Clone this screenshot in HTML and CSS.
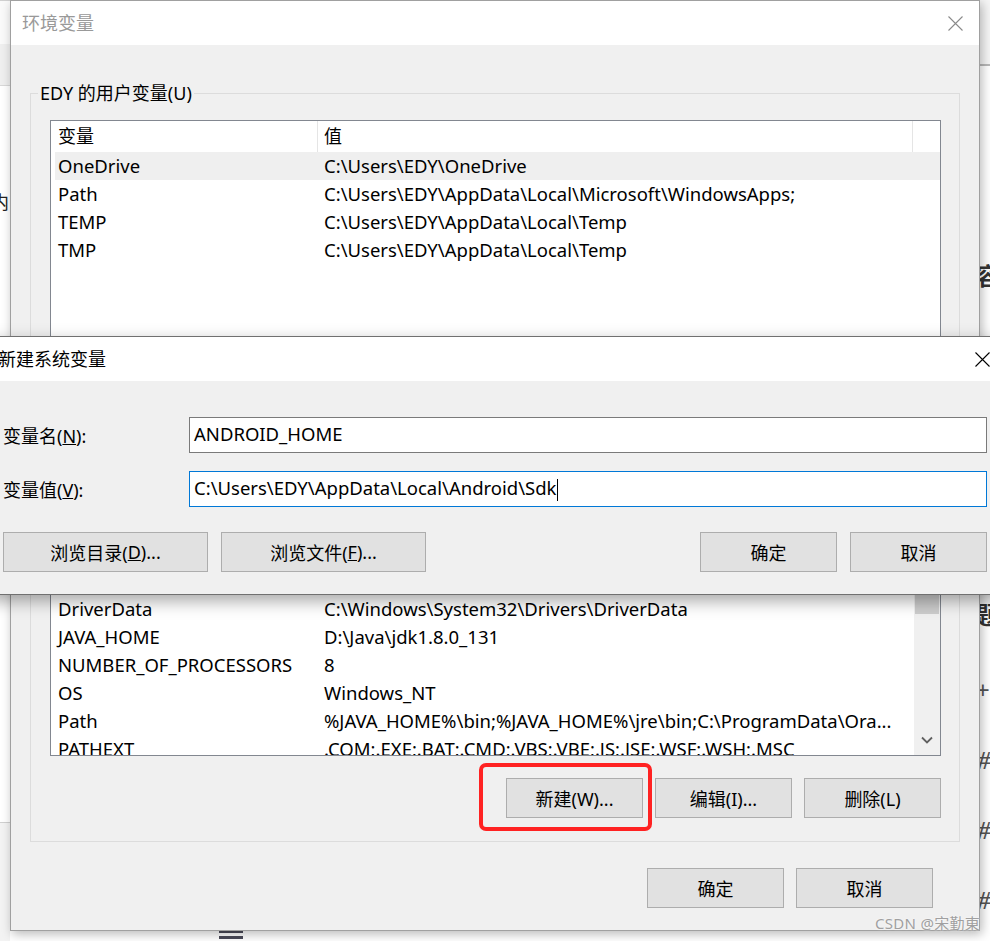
FILE: index.html
```html
<!DOCTYPE html>
<html lang="zh-CN">
<head>
<meta charset="utf-8">
<title>环境变量</title>
<link rel="stylesheet" href="styles.css">
</head>
<body>
<div class="desk">
  <div class="bg-left">
    <div class="bgl-white"></div>
    <div class="bgl-band"></div>
    <div class="bgl-page"><span class="bgl-char">内</span></div>
    <div class="bgl-foot"></div>
  </div>
  <div class="bg-bottom">
    <span class="menu-bar"></span>
    <span class="menu-bar"></span>
  </div>
  <div class="bg-right">
    <div class="bgr-top"></div>
    <div class="bgr-page">
      <span class="bgr-char c-rong">容</span>
      <span class="bgr-char c-ti">题</span>
      <span class="bgr-char c-plus">+</span>
      <span class="bgr-char c-h1">#</span>
      <span class="bgr-char c-h2">#</span>
      <span class="bgr-char c-h3">#</span>
    </div>
  </div>

  <div class="win env">
    <div class="titlebar">
      <span class="title">环境变量</span>
      <svg class="close" width="15" height="15" viewBox="0 0 15 15"><path d="M0.5 0.5L14.5 14.5M14.5 0.5L0.5 14.5" stroke="#8a8a8a" stroke-width="1.1" fill="none"/></svg>
    </div>
    <div class="body">
      <fieldset class="group g1">
        <legend>EDY 的用户变量(U)</legend>
        <div class="list user">
          <div class="lmain">
            <div class="lhead"><div class="hc1">变量</div><div class="hc2">值</div></div>
            <div class="row sel"><span class="c1">OneDrive</span><span class="c2">C:\Users\EDY\OneDrive</span></div>
            <div class="row"><span class="c1">Path</span><span class="c2">C:\Users\EDY\AppData\Local\Microsoft\WindowsApps;</span></div>
            <div class="row"><span class="c1">TEMP</span><span class="c2">C:\Users\EDY\AppData\Local\Temp</span></div>
            <div class="row"><span class="c1">TMP</span><span class="c2">C:\Users\EDY\AppData\Local\Temp</span></div>
          </div>
        </div>
        <div class="btnrow">
          <button class="btn">新建(N)...</button>
          <button class="btn">编辑(E)...</button>
          <button class="btn">删除(D)</button>
        </div>
      </fieldset>

      <fieldset class="group g2">
        <legend>系统变量(S)</legend>
        <div class="list sys">
          <div class="lmain">
            <div class="lhead"><div class="hc1">变量</div><div class="hc2">值</div></div>
            <div class="row"><span class="c1">ComSpec</span><span class="c2">C:\Windows\system32\cmd.exe</span></div>
            <div class="row"><span class="c1">DriverData</span><span class="c2">C:\Windows\System32\Drivers\DriverData</span></div>
            <div class="row"><span class="c1">JAVA_HOME</span><span class="c2">D:\Java\jdk1.8.0_131</span></div>
            <div class="row"><span class="c1">NUMBER_OF_PROCESSORS</span><span class="c2">8</span></div>
            <div class="row"><span class="c1">OS</span><span class="c2">Windows_NT</span></div>
            <div class="row"><span class="c1">Path</span><span class="c2">%JAVA_HOME%\bin;%JAVA_HOME%\jre\bin;C:\ProgramData\Ora...</span></div>
            <div class="row"><span class="c1">PATHEXT</span><span class="c2">.COM;.EXE;.BAT;.CMD;.VBS;.VBE;.JS;.JSE;.WSF;.WSH;.MSC</span></div>
          </div>
          <div class="sbar">
            <div class="sb-up"></div>
            <div class="sb-thumb"></div>
            <div class="sb-track"></div>
            <div class="sb-down">
              <svg width="12" height="8" viewBox="0 0 12 8"><path d="M1 1.5L6 6.5L11 1.5" stroke="#606060" stroke-width="1.8" fill="none"/></svg>
            </div>
          </div>
        </div>
        <div class="btnrow">
          <button class="btn">新建(W)...</button>
          <button class="btn">编辑(I)...</button>
          <button class="btn">删除(L)</button>
          <span class="mark"></span>
        </div>
      </fieldset>

      <div class="okrow">
        <button class="btn">确定</button>
        <button class="btn">取消</button>
      </div>
    </div>
  </div>

  <div class="win newvar">
    <div class="titlebar">
      <span class="title">新建系统变量</span>
      <svg class="close" width="15" height="15" viewBox="0 0 15 15"><path d="M0.5 0.5L14.5 14.5M14.5 0.5L0.5 14.5" stroke="#000" stroke-width="1.1" fill="none"/></svg>
    </div>
    <div class="nbody">
      <div class="field">
        <label class="flabel">变量名(<u>N</u>):</label>
        <div class="input">ANDROID_HOME</div>
      </div>
      <div class="field">
        <label class="flabel">变量值(<u>V</u>):</label>
        <div class="input focus">C:\Users\EDY\AppData\Local\Android\Sdk<span class="caret"></span></div>
      </div>
      <div class="nbtns">
        <button class="btn wide">浏览目录(<u>D</u>)...</button>
        <button class="btn wide">浏览文件(<u>F</u>)...</button>
        <span class="spacer"></span>
        <button class="btn">确定</button>
        <button class="btn">取消</button>
      </div>
    </div>
  </div>

  <div class="watermark">CSDN @宋勤東</div>
</div>
</body>
</html>
```

FILE: styles.css
```css
* { box-sizing: border-box; }
html, body { margin: 0; padding: 0; }
body {
  width: 990px;
  height: 941px;
  overflow: hidden;
  background: #ffffff;
  font-family: "Noto Sans", "Noto Sans CJK SC", sans-serif;
  font-size: 18px;
  color: #000;
}
.desk { position: relative; width: 990px; height: 941px; overflow: hidden; }

/* background windows */
.bg-left { position: absolute; left: 0; top: 0; width: 10px; height: 941px; display: flex; flex-direction: column; background: #fff; overflow: hidden; }
.bgl-white { height: 44px; background: #fafafa; border-top: 1px solid #d0d0d0; }
.bgl-band { height: 42px; background: #efefef; border-bottom: 1px solid #d8d8d8; }
.bgl-page { flex: 1; position: relative; background: #fff; border-bottom: 1px solid #d0d0d0; }
.bgl-char { position: absolute; left: -9px; top: 106px; font-size: 18px; color: #222; line-height: 20px; }
.bgl-foot { height: 118px; background: #f3f3f3; }

.bg-bottom { position: absolute; left: 212px; top: 928px; width: 60px; height: 13px; background: #fff; display: flex; flex-direction: column; gap: 3px; padding: 2px 0 0 7px; }
.menu-bar { display: block; width: 24px; height: 3px; background: #4a4a58; }

.bg-right { position: absolute; left: 979px; top: 0; width: 11px; height: 941px; display: flex; flex-direction: column; background: #fff; overflow: hidden; }
.bgr-top { height: 66px; background: #f5f5f5; border-bottom: 2px solid #b8b8b8; }
.bgr-page { flex: 1; position: relative; }
.bgr-char { position: absolute; left: -3px; font-weight: bold; font-size: 24px; line-height: 28px; color: #333; }
.c-rong { top: 196px; }
.c-ti { top: 535px; }
.c-plus { top: 610px; font-weight: normal; color: #555; }
.c-h1 { top: 680px; font-weight: normal; font-style: italic; color: #555; }
.c-h2 { top: 750px; font-weight: normal; font-style: italic; color: #555; }
.c-h3 { top: 820px; font-weight: normal; font-style: italic; color: #555; }

/* windows */
.win { position: absolute; background: #f0f0f0; display: flex; flex-direction: column; }
.titlebar { height: 44px; flex: none; background: #fff; display: flex; align-items: center; justify-content: space-between; }
.title { line-height: 24px; white-space: nowrap; }

.env { left: 10px; top: 0; width: 970px; height: 931px; border: 1px solid #a0a0a0; box-shadow: 2px 3px 10px rgba(0,0,0,.28); }
.env .title { padding-left: 11px; color: #999; }
.env .close { margin-right: 16px; }
.body { flex: 1; display: flex; flex-direction: column; padding: 0 19px; }

.group { margin: 0; min-width: 0; border: 1px solid #dcdcdc; padding: 0 18px 23px 19px; }
.group legend { padding: 0 2px; margin-left: -12px; line-height: 24px; height: 24px; }
.g1 { margin-top: 36px; }
.g2 { margin-top: 10px; }

.list { margin-top: 15px; background: #fff; border: 1px solid #828790; display: flex; overflow: hidden; }
.user { height: 280px; }
.sys { height: 221px; }
.lmain { flex: 1; min-width: 0; overflow: hidden; }
.lhead { display: grid; grid-template-columns: 267px 595px; height: 31px; line-height: 31px; }
.hc1 { padding-left: 7px; border-right: 1px solid #e5e5e5; }
.hc2 { padding-left: 6px; border-right: 1px solid #e5e5e5; }
.row { display: grid; grid-template-columns: 263px 595px; margin-left: 4px; height: 28px; line-height: 28px; white-space: nowrap; font-size: 18.5px; }
.row .c1 { padding-left: 3px; }
.row .c2 { padding-left: 6px; overflow: hidden; }
.row.sel { background: #efefef; }

.sbar { width: 26px; flex: none; background: #f0f0f0; display: flex; flex-direction: column; }
.sb-up { height: 24px; }
.sb-thumb { height: 54px; margin: 0 1px; background: #cdcdcd; }
.sb-track { flex: 1; }
.sb-down { height: 26px; display: flex; align-items: center; justify-content: center; padding-bottom: 4px; }

.btnrow { margin-top: 22px; display: flex; justify-content: flex-end; gap: 12px; position: relative; }
.btn {
  width: 137px; height: 40px; flex: none;
  background: #e1e1e1; border: 1px solid #adadad; border-radius: 0;
  font: inherit; color: #000; padding: 0;
  display: flex; align-items: center; justify-content: center;
}
.btn.wide { width: 205px; }
.mark { position: absolute; left: 429px; top: -15px; width: 173px; height: 68px; border: 4px solid #ff2222; border-radius: 7px; }

.okrow { margin-top: 26px; display: flex; justify-content: flex-end; gap: 12px; padding-right: 27px; }

/* new variable dialog */
.newvar { left: -14px; top: 336px; width: 1021px; height: 259px; border: 1px solid #707070; box-shadow: 0 6px 16px rgba(0,0,0,.35); }
.newvar .title { padding-left: 11px; }
.newvar .close { margin-right: 16px; }
.nbody { flex: 1; padding: 36px 19px 0 16px; display: flex; flex-direction: column; }
.field { display: flex; height: 36px; align-items: center; }
.field + .field { margin-top: 18px; }
.flabel { width: 186px; flex: none; }
.input { flex: 1; height: 36px; background: #fff; border: 1px solid #7a7a7a; padding-left: 4px; line-height: 31px; white-space: nowrap; font-size: 18.5px; }
.input.focus { border-color: #0078d7; }
.caret { display: inline-block; width: 1px; height: 22px; background: #000; vertical-align: middle; margin-left: 1px; }
.nbtns { margin-top: 25px; display: flex; gap: 13px; }
.nbtns .spacer { flex: 1; }

.watermark { position: absolute; left: 875px; top: 913px; font-size: 15px; line-height: 20px; color: #a0a0a0; letter-spacing: 0.3px; text-shadow: 0 0 2px #fff; }
```
